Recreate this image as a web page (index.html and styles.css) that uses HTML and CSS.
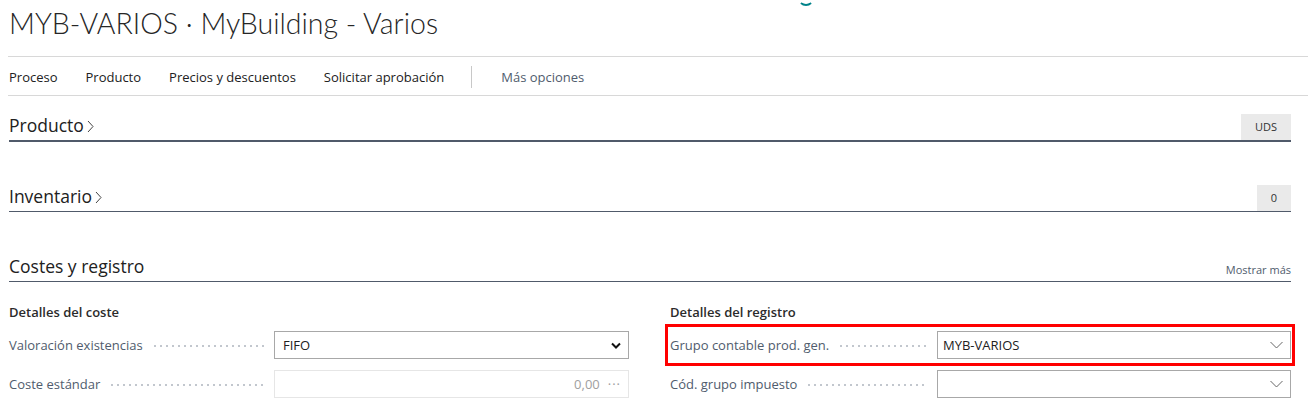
FILE: index.html
```html
<!DOCTYPE html>
<html lang="es">
<head>
  <meta charset="UTF-8" />
  <title>MYB-VARIOS · MyBuilding - Varios</title>
  <link rel="stylesheet" href="styles.css">
</head>
<body>

  <div class="spinner"></div>

  <header class="page-head">
    <h1 class="page-title">MYB-VARIOS · MyBuilding - Varios</h1>
  </header>

  <nav class="actions">
    <a class="action">Proceso</a>
    <a class="action">Producto</a>
    <a class="action">Precios y descuentos</a>
    <a class="action">Solicitar aprobación</a>
    <span class="action-sep"></span>
    <a class="action more">Más opciones</a>
  </nav>

  <main class="content">

    <section class="fasttab collapsed thick">
      <div class="tab-head">
        <h2 class="tab-title">Producto
          <svg class="tab-chev" width="7" height="13" viewBox="0 0 7 13"><polyline points="1,1 6,6.5 1,12" fill="none" stroke="#444" stroke-width="1"/></svg>
        </h2>
        <span class="summary">UDS</span>
      </div>
    </section>

    <section class="fasttab collapsed">
      <div class="tab-head">
        <h2 class="tab-title">Inventario
          <svg class="tab-chev" width="7" height="13" viewBox="0 0 7 13"><polyline points="1,1 6,6.5 1,12" fill="none" stroke="#444" stroke-width="1"/></svg>
        </h2>
        <span class="summary">0</span>
      </div>
    </section>

    <section class="fasttab open">
      <div class="tab-head">
        <h2 class="tab-title">Costes y registro</h2>
        <a class="show-more">Mostrar más</a>
      </div>

      <div class="groups">
        <div class="group">
          <h3 class="group-title">Detalles del coste</h3>
          <div class="field">
            <span class="label">Valoración existencias</span>
            <span class="leader"></span>
            <div class="control select">
              <span class="value">FIFO</span>
              <svg class="chev-bold" width="10" height="7" viewBox="0 0 10 7"><polyline points="1,1.5 5,5.5 9,1.5" fill="none" stroke="#111" stroke-width="2"/></svg>
            </div>
          </div>
          <div class="field">
            <span class="label">Coste estándar</span>
            <span class="leader"></span>
            <div class="control disabled">
              <span class="value num">0,00</span>
              <span class="ellipsis">···</span>
            </div>
          </div>
        </div>

        <div class="group">
          <h3 class="group-title">Detalles del registro</h3>
          <div class="field marked">
            <span class="label">Grupo contable prod. gen.</span>
            <span class="leader"></span>
            <div class="control lookup">
              <span class="value">MYB-VARIOS</span>
              <svg class="chev-thin" width="13" height="8" viewBox="0 0 13 8"><polyline points="0.5,1 6.5,7 12.5,1" fill="none" stroke="#666" stroke-width="1"/></svg>
            </div>
          </div>
          <div class="field">
            <span class="label">Cód. grupo impuesto</span>
            <span class="leader"></span>
            <div class="control lookup">
              <span class="value"></span>
              <svg class="chev-thin" width="13" height="8" viewBox="0 0 13 8"><polyline points="0.5,1 6.5,7 12.5,1" fill="none" stroke="#666" stroke-width="1"/></svg>
            </div>
          </div>
        </div>
      </div>
    </section>

  </main>

</body>
</html>
```

FILE: styles.css
```css
body {
  margin: 0;
  background: #fff;
  color: #212121;
  font-family: 'Segoe UI', 'Open Sans', sans-serif;
  overflow: hidden;
}
.spinner {
  position: absolute;
  top: -10px;
  left: 798px;
  width: 12px;
  height: 12px;
  border-radius: 50%;
  border: 2px solid transparent;
  border-bottom-color: #00838a;
}
.page-head {
  margin-left: 8px;
  height: 56px;
  border-bottom: 1px solid #d8d8d8;
}
.page-title {
  margin: 0;
  padding-left: 1px;
  font-family: 'Lato', 'Open Sans', sans-serif;
  font-size: 28.5px;
  font-weight: 300;
  line-height: 46px;
  color: #262626;
}
.actions {
  margin-left: 8px;
  height: 37px;
  padding-top: 1px;
  border-bottom: 1px solid #d8d8d8;
  display: flex;
  align-items: center;
  font-size: 13px;
}
.action {
  padding: 0 1px;
  margin-right: 26px;
  color: #212121;
}
.action-sep {
  width: 1px;
  height: 22px;
  background: #c8c8c8;
  margin: 0 28px 0 0;
}
.action.more {
  color: #505c6d;
}
.content {
  padding: 0 17px 0 9px;
}
.fasttab {
  margin-top: 25px;
}
.fasttab:first-child {
  margin-top: 0;
}
.tab-head {
  height: 44px;
  display: flex;
  align-items: flex-end;
  justify-content: space-between;
  border-bottom: 1px solid #505a6a;
}
.fasttab.thick .tab-head {
  border-bottom-width: 2px;
}
.tab-title {
  margin: 0 0 3px;
  font-size: 17.5px;
  font-weight: 400;
  color: #212121;
  display: flex;
  align-items: center;
}
.tab-chev {
  margin-left: 3px;
  margin-top: 2px;
}
.summary {
  background: #eaeaea;
  font-size: 11px;
  color: #333;
  height: 26px;
  line-height: 26px;
  padding: 0 14px;
}
.show-more {
  font-size: 11px;
  color: #505c6d;
  margin-bottom: 4px;
}
.groups {
  display: grid;
  grid-template-columns: 620px 621px;
  column-gap: 41px;
  padding-top: 20px;
}
.group-title {
  margin: 0 0 9px;
  font-size: 13px;
  font-weight: 600;
  color: #2b2b2b;
  line-height: 20px;
}
.field {
  display: flex;
  align-items: center;
  height: 28px;
  margin-bottom: 11px;
  position: relative;
}
.field.marked::after {
  content: '';
  position: absolute;
  top: -7px;
  bottom: -7px;
  left: -5px;
  right: -4px;
  border: 3px solid #f00;
}
.label {
  font-size: 13px;
  color: #505c6d;
  white-space: nowrap;
}
.leader {
  flex: 1;
  height: 2px;
  margin: 2px 9px 0 9px;
  background: radial-gradient(circle, #c2c7ce 0.8px, transparent 1px) repeat-x;
  background-size: 6px 2px;
}
.control {
  width: 355px;
  height: 28px;
  box-sizing: border-box;
  border: 1px solid #a8a8a8;
  display: flex;
  align-items: center;
  padding: 0 7px 0 8px;
  font-size: 13px;
  color: #212121;
}
.group:last-child .control {
  width: 354px;
  padding-left: 5px;
}
.control .value {
  flex: 1;
}
.control.disabled {
  border-color: #e6e6e6;
  color: #a0a0a0;
}
.value.num {
  text-align: right;
}
.ellipsis {
  margin-left: 8px;
  color: #a0a0a0;
  letter-spacing: 1px;
}
```
